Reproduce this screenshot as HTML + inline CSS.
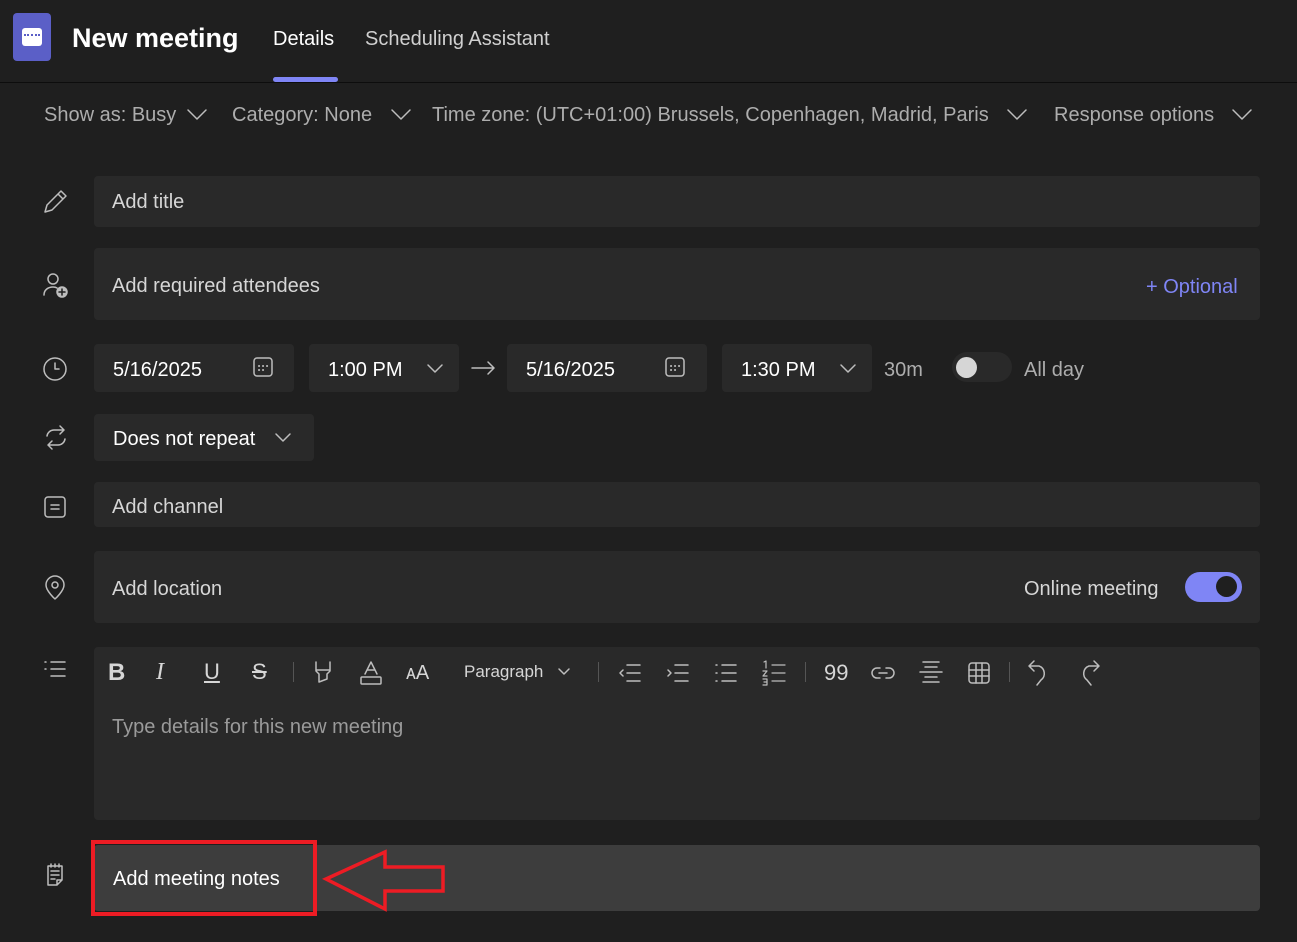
<!DOCTYPE html><html><head><style>
*{box-sizing:border-box;margin:0;padding:0}
body{width:1297px;height:942px;background:#1f1f1f;font-family:"Liberation Sans",sans-serif;color:#d6d6d6;position:relative;overflow:hidden}
.a{position:absolute}
.f{position:absolute;background:#292929;border-radius:4px}
.t{position:absolute;font-size:20px;white-space:nowrap}
svg{position:absolute;fill:none;stroke:#bdbdbd;stroke-width:1.5;stroke-linecap:round;stroke-linejoin:round}
</style></head><body>
<div class="a" style="left:13px;top:13px;width:38px;height:48px;background:#5b5fc7;border-radius:4px"></div>
<div class="a" style="left:22px;top:28px;width:20px;height:18px;background:#fff;border-radius:3px"></div>
<div class="a" style="left:24px;top:34px;width:16px;height:2px;border-top:2px dotted #5b5fc7"></div>
<div class="t" style="left:72px;top:23px;font-size:27px;font-weight:bold;color:#fff">New meeting</div>
<div class="t" style="left:273px;top:28px;color:#fff">Details</div>
<div class="t" style="left:365px;top:28px;color:#d0d0d0">Scheduling Assistant</div>
<div class="a" style="left:273px;top:77px;width:65px;height:5px;background:#7f85f5;border-radius:3px"></div>
<div class="a" style="left:0;top:82px;width:1297px;height:1px;background:#0d0d0d"></div>
<div class="t" style="left:44px;top:104px;color:#adadad">Show as: Busy</div>
<div class="t" style="left:232px;top:104px;color:#adadad">Category: None</div>
<div class="t" style="left:432px;top:104px;color:#adadad">Time zone: (UTC+01:00) Brussels, Copenhagen, Madrid, Paris</div>
<div class="t" style="left:1054px;top:104px;color:#adadad">Response options</div>
<svg style="left:186px;top:106px" width="22" height="16"><path d="M2 4l9 9 9-9"/></svg>
<svg style="left:390px;top:106px" width="22" height="16"><path d="M2 4l9 9 9-9"/></svg>
<svg style="left:1006px;top:106px" width="22" height="16"><path d="M2 4l9 9 9-9"/></svg>
<svg style="left:1231px;top:106px" width="22" height="16"><path d="M2 4l9 9 9-9"/></svg>

<svg style="left:42px;top:188px" width="28" height="28"><path d="M3 24l2-7L19 3l5 5-14 14z M16 6l5 5"/></svg>
<div class="f" style="left:94px;top:176px;width:1166px;height:51px"></div>
<div class="t" style="left:112px;top:191px;color:#d6d6d6">Add title</div>

<svg style="left:42px;top:272px" width="28" height="28"><circle cx="11" cy="7" r="5"/><path d="M2 23c0-5 4-8 9-8 2 0 3 .3 4 1"/><circle cx="20" cy="20" r="5" fill="#bdbdbd"/><path d="M20 17v6M17 20h6" stroke="#1f1f1f"/></svg>
<div class="f" style="left:94px;top:248px;width:1166px;height:72px"></div>
<div class="t" style="left:112px;top:275px">Add required attendees</div>
<div class="t" style="left:1146px;top:276px;color:#7f85f5">+ Optional</div>

<svg style="left:42px;top:356px" width="28" height="28"><circle cx="13" cy="13" r="11"/><path d="M13 7v6h4"/></svg>
<div class="f" style="left:94px;top:344px;width:200px;height:48px"></div>
<div class="t" style="left:113px;top:359px;color:#fff">5/16/2025</div>
<svg style="left:252px;top:356px" width="24" height="24"><rect x="2" y="2" width="18" height="18" rx="3"/><path d="M7 10h.1M11 10h.1M15 10h.1M7 14h.1M11 14h.1" stroke-width="2"/></svg>
<div class="f" style="left:309px;top:344px;width:150px;height:48px"></div>
<div class="t" style="left:328px;top:359px;color:#fff">1:00 PM</div>
<svg style="left:425px;top:362px" width="20" height="14"><path d="M3 3l7 7 7-7"/></svg>
<svg style="left:469px;top:358px" width="28" height="20"><path d="M3 10h22M19 4l6 6-6 6"/></svg>
<div class="f" style="left:507px;top:344px;width:200px;height:48px"></div>
<div class="t" style="left:526px;top:359px;color:#fff">5/16/2025</div>
<svg style="left:664px;top:356px" width="24" height="24"><rect x="2" y="2" width="18" height="18" rx="3"/><path d="M7 10h.1M11 10h.1M15 10h.1M7 14h.1M11 14h.1" stroke-width="2"/></svg>
<div class="f" style="left:722px;top:344px;width:150px;height:48px"></div>
<div class="t" style="left:741px;top:359px;color:#fff">1:30 PM</div>
<svg style="left:838px;top:362px" width="20" height="14"><path d="M3 3l7 7 7-7"/></svg>
<div class="t" style="left:884px;top:359px;color:#adadad">30m</div>
<div class="a" style="left:952px;top:352px;width:60px;height:30px;background:#292929;border-radius:15px"></div>
<div class="a" style="left:956px;top:357px;width:21px;height:21px;background:#d6d6d6;border-radius:50%"></div>
<div class="t" style="left:1024px;top:359px;color:#adadad">All day</div>

<svg style="left:42px;top:424px" width="28" height="28"><path d="M5 12a7 7 0 0 1 7-6h10M18 2l4 4-4 4M23 15a7 7 0 0 1-7 6H6M10 25l-4-4 4-4"/></svg>
<div class="f" style="left:94px;top:414px;width:220px;height:47px"></div>
<div class="t" style="left:113px;top:428px;color:#fff">Does not repeat</div>
<svg style="left:273px;top:431px" width="20" height="14"><path d="M3 3l7 7 7-7"/></svg>

<svg style="left:42px;top:494px" width="28" height="28"><rect x="3" y="3" width="20" height="20" rx="3"/><path d="M9 11h8M9 15h8"/></svg>
<div class="f" style="left:94px;top:482px;width:1166px;height:45px"></div>
<div class="t" style="left:112px;top:496px">Add channel</div>

<svg style="left:42px;top:574px" width="28" height="28"><path d="M13 25s-9-8-9-14a9 9 0 0 1 18 0c0 6-9 14-9 14z"/><circle cx="13" cy="11" r="3"/></svg>
<div class="f" style="left:94px;top:551px;width:1166px;height:72px"></div>
<div class="t" style="left:112px;top:578px">Add location</div>
<div class="t" style="left:1024px;top:578px">Online meeting</div>
<div class="a" style="left:1185px;top:572px;width:57px;height:30px;background:#7f85f5;border-radius:15px"></div>
<div class="a" style="left:1216px;top:576px;width:21px;height:21px;background:#1f1f1f;border-radius:50%"></div>

<svg style="left:42px;top:658px" width="28" height="24"><path d="M3 4h1M9 4h14M3 11h1M9 11h14M9 18h14"/></svg>
<div class="f" style="left:94px;top:647px;width:1166px;height:173px"></div>
<div class="t" style="left:108px;top:659px;font-weight:bold;font-size:24px;color:#d6d6d6">B</div>
<div class="t" style="left:156px;top:659px;font-style:italic;font-size:24px;font-family:'Liberation Serif',serif">I</div>
<div class="t" style="left:204px;top:659px;font-size:22px;text-decoration:underline">U</div>
<div class="t" style="left:252px;top:659px;font-size:22px;text-decoration:line-through">S</div>
<div class="a" style="left:293px;top:662px;width:1px;height:20px;background:#555"></div>
<svg style="left:312px;top:660px" width="22" height="26"><path d="M4 2v9l3 3v8l8-3v-5l3-3V2M4 10h14"/></svg>
<svg style="left:359px;top:660px" width="24" height="26"><path d="M6 14L12 2l6 12M8 10h8"/><rect x="2" y="17" width="20" height="7" rx="1"/></svg>
<div class="t" style="left:406px;top:662px;font-size:20px">ᴀA</div>
<div class="t" style="left:464px;top:662px;font-size:17px">Paragraph</div>
<svg style="left:556px;top:666px" width="16" height="12"><path d="M3 3l5 5 5-5"/></svg>
<div class="a" style="left:598px;top:662px;width:1px;height:20px;background:#555"></div>
<svg style="left:617px;top:661px" width="26" height="24"><path d="M10 4h13M10 12h13M10 20h13M6 9l-3 3 3 3"/></svg>
<svg style="left:665px;top:661px" width="26" height="24"><path d="M10 4h13M10 12h13M10 20h13M3 9l3 3-3 3"/></svg>
<svg style="left:713px;top:661px" width="26" height="24"><path d="M3 4h1M9 4h14M3 12h1M9 12h14M3 20h1M9 20h14"/></svg>
<svg style="left:761px;top:659px" width="26" height="28"><path d="M11 6h13M11 14h13M11 22h13M3 3l2-1v7M2 12h4l-4 5h4M2 20h4v6H2M3 23h3" stroke-width="1.2"/></svg>
<div class="a" style="left:805px;top:662px;width:1px;height:20px;background:#555"></div>
<div class="t" style="left:824px;top:660px;font-size:22px">99</div>
<svg style="left:870px;top:662px" width="26" height="22"><path d="M10 6H7a5 5 0 0 0 0 10h3M16 6h3a5 5 0 0 1 0 10h-3M9 11h8"/></svg>
<svg style="left:918px;top:659px" width="26" height="28"><path d="M5 3h16M7 8h12M2 13h22M7 18h12M5 23h16"/></svg>
<svg style="left:966px;top:660px" width="26" height="26"><rect x="3" y="3" width="20" height="20" rx="3"/><path d="M3 10h20M3 16h20M10 3v20M16 3v20"/></svg>
<div class="a" style="left:1009px;top:662px;width:1px;height:20px;background:#555"></div>
<svg style="left:1026px;top:658px" width="28" height="30"><path d="M8 3L3 8l5 5M3 8h10a8 8 0 0 1 2 14l-4 5"/></svg>
<svg style="left:1074px;top:658px" width="28" height="30"><path d="M20 3l5 5-5 5M25 8H15a8 8 0 0 0-2 14l4 5"/></svg>
<div class="t" style="left:112px;top:716px;color:#9a9a9a">Type details for this new meeting</div>

<svg style="left:44px;top:862px" width="24" height="26"><path d="M4 4h14v14l-5 5H4z M13 23v-5h5M7 2v3M11 2v3M15 2v3M7 9h8M7 13h8M7 17h4"/></svg>
<div class="a" style="left:94px;top:845px;width:1166px;height:66px;background:#3d3d3d;border-radius:4px"></div>
<div class="a" style="left:91px;top:840px;width:226px;height:76px;border:4px solid #ed1c24"></div>
<div class="t" style="left:113px;top:868px;color:#fff">Add meeting notes</div>
<svg style="left:320px;top:848px;stroke:#ed1c24;stroke-width:3.5;stroke-linejoin:miter;stroke-linecap:butt" width="140" height="66"><path d="M6 31L65 4v15h58v24H65v18z"/></svg>
</body></html>
